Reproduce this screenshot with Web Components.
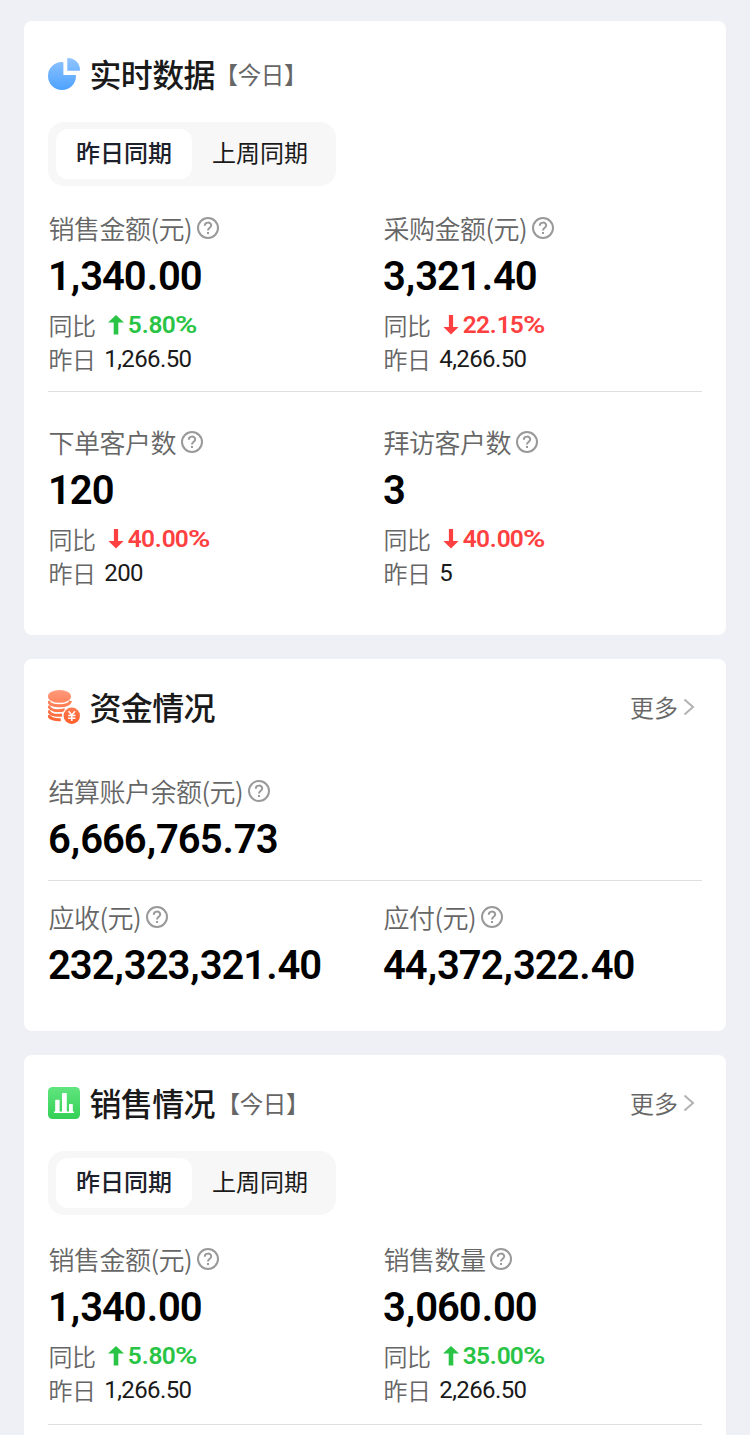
<!DOCTYPE html>
<html lang="zh-CN">
<head>
<meta charset="UTF-8">
<title>数据概览</title>
<style>
  body {
    margin: 0;
    background: #eff0f5;
    font-family: Roboto, "Noto Sans CJK SC", sans-serif;
  }
</style>
</head>
<body>
<data-dashboard></data-dashboard>

<script>
const icons = {
  pie: `
    <svg width="32" height="34" viewBox="0 0 32 34">
      <defs><linearGradient id="g" gradientUnits="userSpaceOnUse" x1="0" y1="0" x2="0" y2="34">
        <stop offset="0" stop-color="#92c5ff"/><stop offset="1" stop-color="#4ba1ff"/>
      </linearGradient></defs>
      <g fill="url(#g)">
        <path d="M14 5q1.4 0 1.4.6V18H27.4q.6 0 .6 1A14 14 0 1 1 14 5z"/>
        <path d="M19.3 1.6q0-.6.8-.6A12 12 0 0 1 32 13q0 .8-.7.8H19.3z"/>
      </g>
    </svg>`,
  coins: `
    <svg width="32" height="34" viewBox="0 0 32 34">
      <defs><linearGradient id="g" gradientUnits="userSpaceOnUse" x1="0" y1="0" x2="0" y2="34">
        <stop offset="0" stop-color="#ff9a7b"/><stop offset="1" stop-color="#ff5f2b"/>
      </linearGradient></defs>
      <ellipse cx="11.5" cy="6.4" rx="11.5" ry="6.4" fill="url(#g)"/>
      <g fill="none" stroke="url(#g)" stroke-width="3">
        <path d="M.4 10.8C2 17.3 21 17.3 22.6 10.8"/>
        <path d="M.4 15.6C2 20.5 9 21.5 17 19.7"/>
        <path d="M.4 20.4C2 24.7 8 25.8 14 25"/>
        <path d="M.4 25.2C2 29 7 29.9 12.8 29.7"/>
      </g>
      <circle cx="23.8" cy="25.8" r="9.4" fill="#fff"/>
      <circle cx="23.8" cy="25.8" r="8.2" fill="url(#g)"/>
      <path d="M20.6 21.3L23.8 25L27 21.3M23.8 25V31M20.2 25.5H27.4M20.2 28.2H27.4" fill="none" stroke="#fff" stroke-width="1.5"/>
    </svg>`,
  bars: `
    <svg width="32" height="34" viewBox="0 0 32 34">
      <defs><linearGradient id="g" gradientUnits="userSpaceOnUse" x1="0" y1="0" x2="0" y2="34">
        <stop offset="0" stop-color="#62e680"/><stop offset="1" stop-color="#32cf55"/>
      </linearGradient></defs>
      <rect y="1" width="32" height="32" rx="4.5" fill="url(#g)"/>
      <path d="M6 25.4H7.2V14.5Q7.2 13.8 8 13.8H10.8Q11.6 13.8 11.6 14.5V25.4H14V7.8Q14 7 14.8 7H18Q18.8 7 18.8 7.8V25.4H21V18.6Q21 18 21.8 18H24Q24.8 18 24.8 18.6V25.4H26V27H6z" fill="#fff"/>
    </svg>`
};

// separators and the percent sign get a bit more room than the digits
function formatNumber(text) {
  return text
    .replace(/[,.]/g, '<span class="sep">$&</span>')
    .replace('%', '<span class="sign">%</span>');
}

class DashCard extends HTMLElement {
  constructor() {
    super();
    this.attachShadow({ mode: 'open' });
  }

  connectedCallback() {
    const more = this.hasAttribute('more') ? `
      <div class="more"><span>更多</span>
        <svg width="12" height="18" viewBox="0 0 12 18"><path d="M1.5 1.5L10 9L1.5 16.5" fill="none" stroke="#b2b2b2" stroke-width="2"/></svg>
      </div>` : '';
    this.shadowRoot.innerHTML = `
      <style>
        :host {
          display: block;
          box-sizing: border-box;
          background: #fff;
          border-radius: 8px;
          padding: 0 24px;
        }
        header {
          display: flex;
          align-items: center;
          height: 36px;
          padding-top: var(--head-top, 30px);
        }
        header > svg { flex: none; margin-right: 9.5px; }
        h2 {
          margin: 0;
          padding-top: 3px;
          font-size: 32px;
          line-height: 36px;
          font-weight: 500;
          letter-spacing: -0.64px;
          color: #1a1a1a;
        }
        .period {
          padding-top: 3px;
          font-size: 23.5px;
          line-height: 36px;
          letter-spacing: -0.3px;
          color: #666;
          margin-left: var(--period-gap, 1.5px);
        }
        .more {
          display: flex;
          align-items: center;
          gap: 5px;
          margin: 0 7px 0 auto;
          font-size: 24px;
          line-height: 36px;
          font-weight: 350;
          color: #666;
        }
        .more span { padding-top: 3px; }
      </style>
      <header>
        ${icons[this.getAttribute('icon')]}
        <h2>${this.getAttribute('heading')}</h2>
        ${this.hasAttribute('period') ? `<span class="period">【${this.getAttribute('period')}】</span>` : ''}
        ${more}
      </header>
      <slot></slot>
    `;
  }
}

class SegmentTabs extends HTMLElement {
  constructor() {
    super();
    this.attachShadow({ mode: 'open' });
  }

  connectedCallback() {
    const labels = this.getAttribute('labels').split(',');
    this.shadowRoot.innerHTML = `
      <style>
        :host {
          display: flex;
          box-sizing: border-box;
          width: 288px;
          height: 64px;
          padding: 7px 8px;
          border-radius: 16px;
          background: #f7f7f7;
        }
        .tab {
          flex: 1;
          height: 50px;
          border-radius: 12px;
          font-size: 24px;
          line-height: 51px;
          text-align: center;
          color: #1a1a1a;
        }
        .active {
          background: #fff;
          color: #1d212b;
          font-weight: 500;
        }
      </style>
      ${labels.map((label, i) => `<div class="tab ${i === 0 ? 'active' : ''}">${label}</div>`).join('')}
    `;
  }
}

class MetricRow extends HTMLElement {
  constructor() {
    super();
    this.attachShadow({ mode: 'open' });
    this.shadowRoot.innerHTML = `
      <style>
        :host {
          display: grid;
          grid-template-columns: 335px 1fr;
        }
        :host([divided]) { border-bottom: 1px solid #dfdfdf; }
      </style>
      <slot></slot>
    `;
  }
}

class MetricItem extends HTMLElement {
  constructor() {
    super();
    this.attachShadow({ mode: 'open' });
  }

  connectedCallback() {
    const change = this.getAttribute('change');
    const dir = this.getAttribute('dir');
    const arrow = dir === 'up'
      ? 'M8 0L16 7.5H10.3V19.5H5.7V7.5H0z'
      : 'M8 19.5L.4 12H5.9V0H10.1V12H15.6z';
    this.shadowRoot.innerHTML = `
      <style>
        :host {
          display: block;
          white-space: nowrap;
        }
        .label, .change, .base {
          display: flex;
          align-items: center;
          color: #666;
        }
        .name {
          padding-left: 0.5px;
          font-family: "Noto Sans CJK SC", sans-serif;
          font-weight: 350;
        }
        .label {
          height: 36px;
          font-size: 26px;
          line-height: 36px;
          letter-spacing: -0.52px;
        }
        .label .name { padding-bottom: 2px; }
        .label svg { margin: 0 0 2px 5px; }
        .value {
          height: 58px;
          font-size: 40px;
          line-height: 60px;
          font-weight: 600;
          letter-spacing: -1.03px;
          color: #000;
        }
        .value .sep { margin: 0 1px; }
        .change, .base {
          font-size: 24px;
          letter-spacing: -0.6px;
        }
        .change { height: 40px; line-height: 40px; }
        .base { height: 28px; line-height: 28px; }
        .change svg { margin: 0 4px 0 12.5px; }
        .pct {
          font-size: 24.5px;
          font-weight: 600;
          letter-spacing: -0.9px;
        }
        .pct .sep { margin: 0 0.8px; }
        .pct .sign {
          display: inline-block;
          transform: scaleX(1.24);
          transform-origin: left;
        }
        .up { color: #29c445; fill: #29c445; }
        .down { color: #ff4040; fill: #ff4040; }
        .num { margin-left: 9px; color: #1a1a1a; }
      </style>
      <div class="label">
        <span class="name">${this.getAttribute('label')}</span>
        <svg width="22" height="22" viewBox="0 0 22 22" fill="none" stroke="#999" stroke-width="2">
          <circle cx="11" cy="11" r="10"/>
          <path d="M7.8 8.8C7.8 4.6 14.2 4.6 14.2 8.6C14.2 10.8 11 10.9 11 13.4"/>
          <path d="M11 15V17.1"/>
        </svg>
      </div>
      <div class="value">${formatNumber(this.getAttribute('value'))}</div>
      ${change ? `
      <div class="change">
        <span class="name">同比</span>
        <svg class="${dir}" width="16" height="20" viewBox="0 0 16 20"><path d="${arrow}"/></svg>
        <span class="pct ${dir}">${formatNumber(change)}</span>
      </div>
      <div class="base">
        <span class="name">昨日</span>
        <span class="num">${this.getAttribute('base')}</span>
      </div>` : ''}
    `;
  }
}

class DataDashboard extends HTMLElement {
  constructor() {
    super();
    this.attachShadow({ mode: 'open' });
    this.shadowRoot.innerHTML = `
      <style>
        :host {
          display: flex;
          flex-direction: column;
          gap: 24px;
          padding: 21px 24px 0;
        }
        .realtime { height: 614px; --head-top: 35px; --period-gap: -0.5px; }
        .realtime segment-tabs { margin-top: 30px; }
        .realtime metric-row { padding: 25px 0 18px; }
        .realtime metric-row + metric-row { padding: 33px 0 0; }
        .funds { height: 372px; }
        .funds metric-row { padding: 49px 0 12px; }
        .funds metric-row + metric-row { padding: 19px 0 0; }
        .sales { height: 380px; border-radius: 8px 8px 0 0; }
        .sales segment-tabs { margin-top: 30px; }
        .sales metric-row { padding: 27px 0 20px; }
      </style>
      <dash-card class="realtime" icon="pie" heading="实时数据" period="今日">
        <segment-tabs labels="昨日同期,上周同期"></segment-tabs>
        <metric-row divided>
          <metric-item label="销售金额(元)" value="1,340.00" dir="up" change="5.80%" base="1,266.50"></metric-item>
          <metric-item label="采购金额(元)" value="3,321.40" dir="down" change="22.15%" base="4,266.50"></metric-item>
        </metric-row>
        <metric-row>
          <metric-item label="下单客户数" value="120" dir="down" change="40.00%" base="200"></metric-item>
          <metric-item label="拜访客户数" value="3" dir="down" change="40.00%" base="5"></metric-item>
        </metric-row>
      </dash-card>
      <dash-card class="funds" icon="coins" heading="资金情况" more>
        <metric-row divided>
          <metric-item label="结算账户余额(元)" value="6,666,765.73"></metric-item>
        </metric-row>
        <metric-row>
          <metric-item label="应收(元)" value="232,323,321.40"></metric-item>
          <metric-item label="应付(元)" value="44,372,322.40"></metric-item>
        </metric-row>
      </dash-card>
      <dash-card class="sales" icon="bars" heading="销售情况" period="今日" more>
        <segment-tabs labels="昨日同期,上周同期"></segment-tabs>
        <metric-row divided>
          <metric-item label="销售金额(元)" value="1,340.00" dir="up" change="5.80%" base="1,266.50"></metric-item>
          <metric-item label="销售数量" value="3,060.00" dir="up" change="35.00%" base="2,266.50"></metric-item>
        </metric-row>
      </dash-card>
    `;
  }
}

customElements.define('dash-card', DashCard);
customElements.define('segment-tabs', SegmentTabs);
customElements.define('metric-row', MetricRow);
customElements.define('metric-item', MetricItem);
customElements.define('data-dashboard', DataDashboard);
</script>
</body>
</html>
